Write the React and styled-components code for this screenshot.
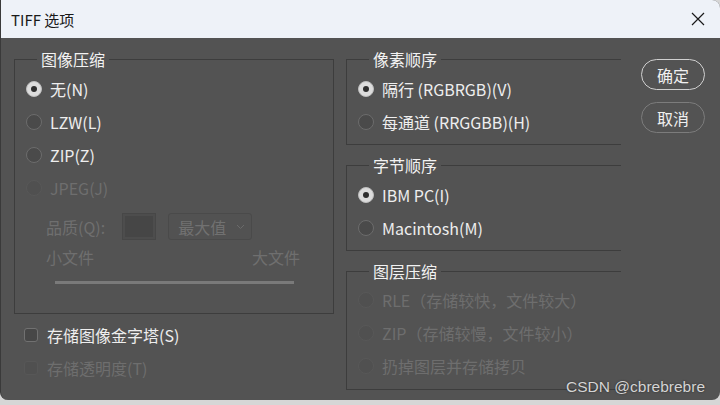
import React from 'react'
import styled, { createGlobalStyle } from 'styled-components'

const GlobalStyle = createGlobalStyle`
  html, body {
    margin: 0;
    padding: 0;
    background: #d6d6d6;
  }
  body {
    width: 720px;
    height: 405px;
    overflow: hidden;
    font-family: "Noto Sans CJK SC", sans-serif;
  }
`

const Window = styled.div`
  position: relative;
  width: 720px;
  height: 400px;
  box-sizing: border-box;
  background: #535353;
  border-left: 1px solid #3a3a3a;
  border-radius: 0 8px 8px 8px;
  overflow: hidden;
  display: flex;
  flex-direction: column;
`

const TitleBar = styled.div`
  height: 38px;
  flex-shrink: 0;
  background: #eef2f8;
  display: flex;
  align-items: center;
  justify-content: space-between;
  padding: 0 15px 0 10px;
  font-size: 15px;
  color: #1a1a1a;
`

const CloseIcon = () => (
  <svg width="14" height="14" viewBox="0 0 14 14">
    <path d="M1 1 L13 13 M13 1 L1 13" stroke="#1a1a1a" strokeWidth="1.2" fill="none" />
  </svg>
)

const Body = styled.div`
  flex: 1;
  display: flex;
  align-items: flex-start;
  padding: 12px 0 0 13px;
`

const LeftCol = styled.div`
  width: 320px;
  display: flex;
  flex-direction: column;
`

const RightCol = styled.div`
  width: 275px;
  margin-left: 12px;
  display: flex;
  flex-direction: column;
  gap: 11px;
`

const Group = styled.fieldset`
  margin: 0;
  padding: 0;
  min-width: 0;
  border: 1px solid #3d3d3d;
  border-right: ${p => (p.$open ? 'none' : '1px solid #3d3d3d')};
`

const Legend = styled.legend`
  margin-left: 22px;
  padding: 0 4px;
  font-size: 16px;
  line-height: 18px;
  color: #f2f2f2;
`

const GroupInner = styled.div`
  display: flex;
  flex-direction: column;
  padding: ${p => p.$pad || '4px 0 6px 11px'};
`

const OptionRow = styled.label`
  height: 33px;
  display: flex;
  align-items: center;
  gap: 8px;
  font-size: 16px;
  color: ${p => (p.$disabled ? '#6e6e6e' : '#eeeeee')};
  white-space: nowrap;
`

const RadioDot = styled.span`
  width: 16px;
  height: 16px;
  box-sizing: border-box;
  border-radius: 50%;
  flex-shrink: 0;
  display: flex;
  align-items: center;
  justify-content: center;
  background: ${p => (p.$checked ? '#dcdcdc' : p.$disabled ? '#505050' : '#4a4a4a')};
  border: 1px solid ${p => (p.$checked ? '#bdbdbd' : p.$disabled ? '#585858' : '#6c6c6c')};

  &::after {
    content: '';
    display: ${p => (p.$checked ? 'block' : 'none')};
    width: 6px;
    height: 6px;
    border-radius: 50%;
    background: #2e2e2e;
  }
`

const CheckBox = styled.span`
  width: 14px;
  height: 14px;
  box-sizing: border-box;
  border-radius: 3px;
  flex-shrink: 0;
  background: ${p => (p.$disabled ? '#505050' : '#474747')};
  border: 1px solid ${p => (p.$disabled ? '#575757' : '#717171')};
`

const CheckList = styled.div`
  display: flex;
  flex-direction: column;
  margin-top: 4px;
`

const CheckRow = styled(OptionRow)`
  margin-left: 10px;
  gap: 9px;
`

const QualityRow = styled.div`
  display: flex;
  align-items: center;
  height: 27px;
  margin: 9px 0 0 20px;
  font-size: 16px;
  color: #6f6f6f;
`

const QualityBox = styled.span`
  width: 34px;
  height: 27px;
  box-sizing: border-box;
  margin-left: 17px;
  border: 3px solid #4d4d4d;
  outline: 1px solid #474747;
  outline-offset: -1px;
  background: #464646;
`

const Select = styled.span`
  width: 84px;
  height: 27px;
  box-sizing: border-box;
  margin-left: 12px;
  padding: 0 6px 0 9px;
  display: flex;
  align-items: center;
  justify-content: space-between;
  border: 1px solid #4a4a4a;
  border-radius: 3px;
  background: #525252;
  color: #717171;
`

const SizeLabels = styled.div`
  display: flex;
  justify-content: space-between;
  width: 254px;
  margin: 8px 0 0 20px;
  font-size: 16px;
  line-height: 18px;
  color: #6f6f6f;
`

const SliderTrack = styled.div`
  width: 239px;
  height: 3px;
  margin: 15px 0 29px 29px;
  background: #7a7a7a;
`

const Buttons = styled.div`
  margin-left: 20px;
  padding-top: 9px;
  display: flex;
  flex-direction: column;
  gap: 12px;
`

const Button = styled.button`
  width: 64px;
  height: 31px;
  box-sizing: border-box;
  border-radius: 16px;
  background: transparent;
  border: ${p => (p.$primary ? '1.5px solid #d0d0d0' : '1.5px solid #7c7c7c')};
  color: #f0f0f0;
  font-family: "Noto Sans CJK SC", sans-serif;
  font-size: 16px;
  padding: 0;
  line-height: 1;
`

const Watermark = styled.div`
  position: absolute;
  right: 15px;
  bottom: 4px;
  font-family: "Liberation Sans", Arial, sans-serif;
  font-size: 15.5px;
  color: #d4d4d4;
  text-shadow: 0 0 2px #2a2a2a;
`

const Radio = ({ label, checked, disabled }) => (
  <OptionRow $disabled={disabled}>
    <RadioDot $checked={checked} $disabled={disabled} />
    {label}
  </OptionRow>
)

const Check = ({ label, disabled }) => (
  <CheckRow $disabled={disabled}>
    <CheckBox $disabled={disabled} />
    {label}
  </CheckRow>
)

const Chevron = () => (
  <svg width="9" height="6" viewBox="0 0 9 6">
    <path d="M1 1 L4.5 4.5 L8 1" stroke="#6a6a6a" strokeWidth="1" fill="none" />
  </svg>
)

export default function App() {
  return (
    <>
      <GlobalStyle />
      <Window>
        <TitleBar>
          <span>TIFF 选项</span>
          <CloseIcon />
        </TitleBar>
        <Body>
          <LeftCol>
            <Group>
              <Legend>图像压缩</Legend>
              <GroupInner $pad="4px 0 0 11px">
                <Radio label="无(N)" checked />
                <Radio label="LZW(L)" />
                <Radio label="ZIP(Z)" />
                <Radio label="JPEG(J)" disabled />
                <QualityRow>
                  品质(Q):
                  <QualityBox />
                  <Select>
                    最大值
                    <Chevron />
                  </Select>
                </QualityRow>
                <SizeLabels>
                  <span>小文件</span>
                  <span>大文件</span>
                </SizeLabels>
                <SliderTrack />
              </GroupInner>
            </Group>
            <CheckList>
              <Check label="存储图像金字塔(S)" />
              <Check label="存储透明度(T)" disabled />
            </CheckList>
          </LeftCol>

          <RightCol>
            <Group $open>
              <Legend>像素顺序</Legend>
              <GroupInner>
                <Radio label="隔行 (RGBRGB)(V)" checked />
                <Radio label="每通道 (RRGGBB)(H)" />
              </GroupInner>
            </Group>
            <Group $open>
              <Legend>字节顺序</Legend>
              <GroupInner>
                <Radio label="IBM PC(I)" checked />
                <Radio label="Macintosh(M)" />
              </GroupInner>
            </Group>
            <Group $open>
              <Legend>图层压缩</Legend>
              <GroupInner $pad="3px 0 7px 11px">
                <Radio label="RLE（存储较快，文件较大）" disabled />
                <Radio label="ZIP（存储较慢，文件较小）" disabled />
                <Radio label="扔掉图层并存储拷贝" disabled />
              </GroupInner>
            </Group>
          </RightCol>

          <Buttons>
            <Button $primary>确定</Button>
            <Button>取消</Button>
          </Buttons>
        </Body>
        <Watermark>CSDN @cbrebrebre</Watermark>
      </Window>
    </>
  )
}
